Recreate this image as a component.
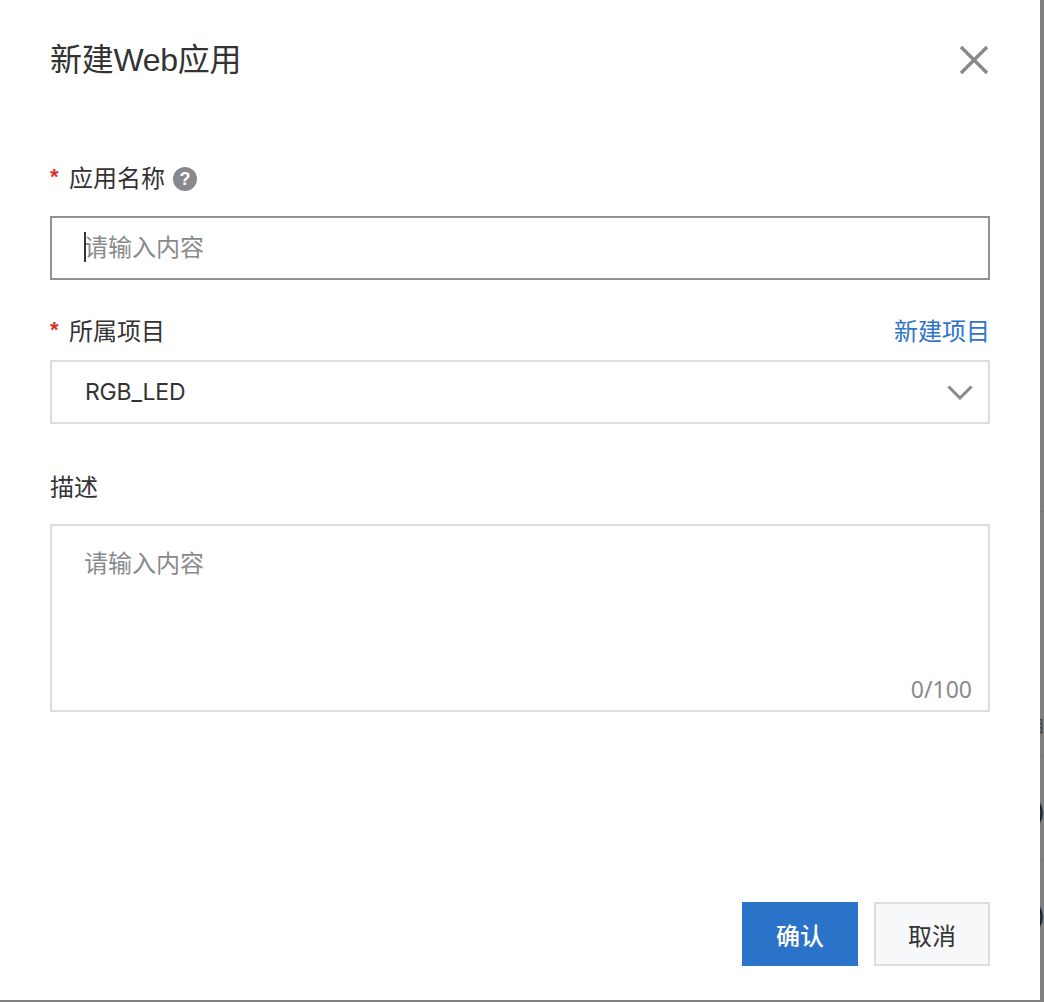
<div class="page">
  <div class="backdrop" aria-hidden="true">
    <div class="row tall"><span class="peek glyph">自</span></div>
    <div class="row"><span class="peek">)</span></div>
    <div class="row"><span class="peek">)</span></div>
  </div>

  <div class="dialog">
    <header class="head">
      <h1>新建Web应用</h1>
      <button class="close" aria-label="关闭">
        <svg width="30" height="30" viewBox="0 0 30 30"><path d="M2 2 L28 28 M28 2 L2 28" stroke="#88898c" stroke-width="3.4" fill="none" /></svg>
      </button>
    </header>

    <div class="field first">
      <div class="label">
        <span class="req">*</span><span>应用名称</span>
        <span class="help">?</span>
      </div>
      <div class="input-wrap">
        <span class="caret"></span>
        <input class="input" placeholder="请输入内容" />
      </div>
    </div>

    <div class="field second">
      <div class="label">
        <span class="req">*</span><span>所属项目</span>
        <a class="link" href="#new">新建项目</a>
      </div>
      <div class="select">
        <span class="value">RGB_LED</span>
        <svg width="26" height="15" viewBox="0 0 26 15"><path d="M1.5 1.5 L13 13 L24.5 1.5" stroke="#88898c" stroke-width="3" fill="none" /></svg>
      </div>
    </div>

    <div class="field third">
      <div class="label"><span>描述</span></div>
      <div class="area-wrap">
        <textarea class="area" placeholder="请输入内容"></textarea>
        <span class="count">0/100</span>
      </div>
    </div>

    <footer class="foot">
      <button class="btn primary">确认</button>
      <button class="btn">取消</button>
    </footer>
  </div>
</div>

<style>
  :global(body) {
    margin: 0;
    background: #808080;
  }

  .page {
    position: relative;
    width: 1044px;
    height: 1002px;
    overflow: hidden;
    font-family: "Liberation Sans", "Noto Sans CJK SC", sans-serif;
    color: #333;
  }

  /* the page behind the dialog, only a 4px sliver of it shows */
  .backdrop {
    position: absolute;
    left: 1040px;
    top: 0;
    width: 4px;
    padding-top: 511px;
    overflow: hidden;
  }

  .row {
    height: 103px;
    display: flex;
    align-items: center;
    border-top: 1px solid #777;
    font-size: 28px;
    color: #222;
  }

  .row.tall {
    height: 243px;
    align-items: flex-end;
  }

  .peek {
    margin-left: -5px;
    position: relative;
    top: 3px;
    line-height: 1;
  }

  .glyph {
    margin-left: -13px;
    top: -20px;
    font-size: 18px;
    color: #444;
  }

  .dialog {
    position: relative;
    width: 1040px;
    height: 1000px;
    box-sizing: border-box;
    padding: 0 50px;
    background: #fff;
    display: flex;
    flex-direction: column;
  }

  .head {
    height: 120px;
    display: flex;
    align-items: center;
    justify-content: space-between;
  }

  h1 {
    margin: 0;
    font-size: 32px;
    font-weight: 400;
    letter-spacing: -0.3px;
    color: #333;
    position: relative;
    top: -3px;
  }

  .close {
    border: 0;
    padding: 0;
    background: none;
    margin-right: 1px;
    height: 30px;
  }

  .field.first { margin-top: 39px; }
  .field.second { margin-top: 32px; }
  .field.third { margin-top: 44px; }

  .label {
    height: 40px;
    margin-bottom: 17px;
    display: flex;
    align-items: center;
    font-size: 24px;
    line-height: 40px;
  }

  .second .label { margin-bottom: 8px; }
  .third .label { margin-bottom: 16px; }

  .req {
    width: 19px;
    color: #d93026;
    font-size: 22px;
    font-weight: 700;
    position: relative;
    top: -2px;
  }

  .help {
    width: 24px;
    height: 24px;
    margin-left: 8px;
    border-radius: 50%;
    background: #88898c;
    color: #fff;
    font-size: 18px;
    font-weight: 700;
    line-height: 24px;
    text-align: center;
  }

  .link {
    margin-left: auto;
    color: #2e74c9;
    text-decoration: none;
  }

  .input-wrap {
    position: relative;
    height: 64px;
  }

  .input {
    display: block;
    width: 100%;
    height: 100%;
    box-sizing: border-box;
    border: 2px solid #8f9193;
    padding: 0 32px;
    outline: none;
    font: inherit;
    font-size: 24px;
    background: #fff;
  }

  .input::placeholder,
  .area::placeholder {
    color: #898a8c;
    opacity: 1;
  }

  .caret {
    position: absolute;
    top: 16px;
    left: 34px;
    width: 2px;
    height: 30px;
    background: #33363b;
    z-index: 1;
  }

  .select {
    height: 64px;
    box-sizing: border-box;
    border: 2px solid #dcdddf;
    padding: 0 15px 0 33px;
    display: flex;
    align-items: center;
    justify-content: space-between;
    font-size: 24px;
    color: #333;
  }

  .value {
    font-family: Inter, sans-serif;
    font-size: 23px;
    letter-spacing: -0.2px;
  }

  .area-wrap {
    position: relative;
    height: 188px;
  }

  .area {
    display: block;
    width: 100%;
    height: 100%;
    box-sizing: border-box;
    border: 2px solid #dcdddf;
    padding: 22px 32px;
    font: inherit;
    font-size: 24px;
    line-height: 32px;
    resize: none;
    outline: none;
  }

  .count {
    position: absolute;
    right: 18px;
    bottom: 7px;
    font-family: "Noto Sans", sans-serif;
    font-size: 23px;
    color: #898a8c;
  }

  .foot {
    margin-top: auto;
    margin-bottom: 34px;
    display: flex;
    justify-content: flex-end;
    gap: 16px;
  }

  .btn {
    width: 116px;
    height: 64px;
    box-sizing: border-box;
    border: 2px solid #dcdddf;
    background: #f7f8fa;
    color: #333;
    font: inherit;
    font-size: 24px;
    padding: 0;
  }

  .btn.primary {
    background: #2b72c9;
    border-color: #2b72c9;
    color: #fff;
    font-weight: 500;
  }
</style>
